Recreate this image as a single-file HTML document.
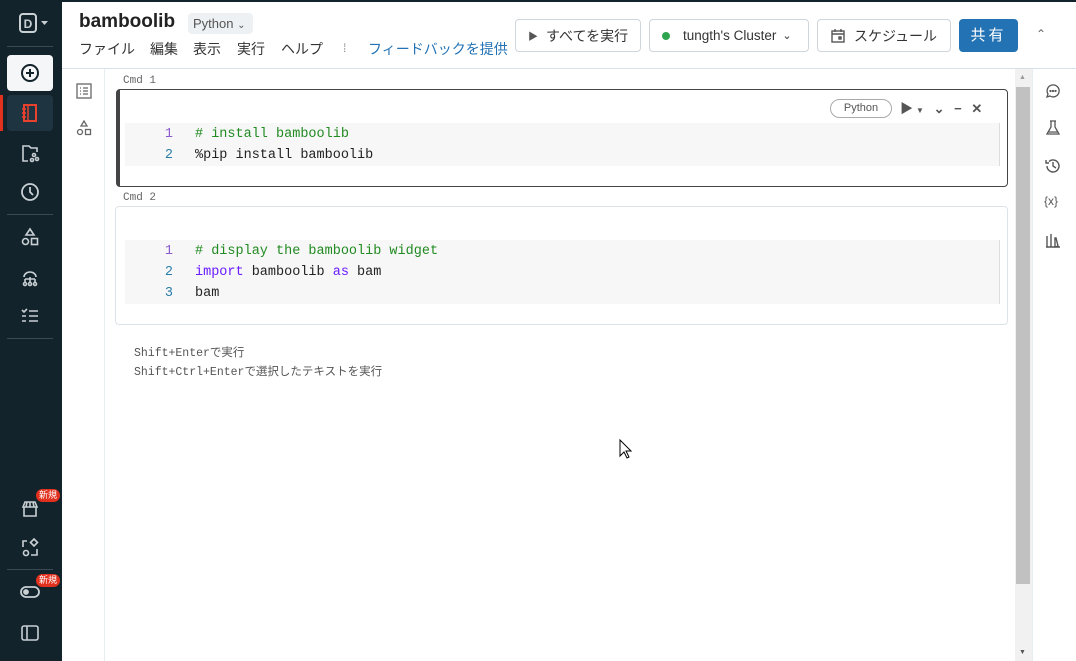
<!DOCTYPE html>
<html><head><meta charset="utf-8"><style>
*{box-sizing:border-box;margin:0;padding:0}
body{width:1076px;height:661px;overflow:hidden;background:#fff;font-family:"Liberation Sans","Noto Sans CJK JP",sans-serif;position:relative;color:#222}
.abs{position:absolute;white-space:nowrap}
.side{left:0;top:0;width:62px;height:661px;background:#13232b}
.ico{position:absolute;left:19px;width:22px;height:22px}
.sep{position:absolute;left:7px;width:46px;height:1px;background:#3a4a52}
.btn{position:absolute;top:19px;height:33px;border:1px solid #cfd6dc;border-radius:4px;background:#fff;font-size:14px;display:flex;align-items:center;padding:0 10px;color:#333;white-space:nowrap}
.mono{font-family:"Liberation Mono","DejaVu Sans Mono",monospace}
.code{font-size:13.5px;line-height:21px}
.ln{position:absolute;left:0;width:48px;text-align:right;color:#2a7fa8}
.cm{color:#218a21}.kw{color:#6a1bff}
.badge{position:absolute;left:36px;background:#e0301e;color:#fff;font-size:9px;border-radius:8px;padding:1px 3px;line-height:11px}
.ri{position:absolute;left:1044px;width:18px;height:18px}
.menu{position:absolute;top:39px;font-size:14px;color:#333}
</style></head><body>
<div class="abs" style="left:0;top:0;width:1076px;height:2px;background:#13232b"></div>
<div class="abs side">
 <svg class="ico" style="top:12px;left:18px;width:34px" viewBox="0 0 34 22"><rect x="2" y="2" width="16" height="18" rx="3" fill="none" stroke="#c8d0d4" stroke-width="2"/><text x="10" y="16" font-size="12" font-weight="bold" fill="#c8d0d4" text-anchor="middle" font-family="Liberation Sans">D</text><path d="M23 9h7l-3.5 4z" fill="#c8d0d4"/></svg>
 <div class="sep" style="top:46px"></div>
 <div class="abs" style="left:7px;top:55px;width:46px;height:36px;background:#f4f6f7;border-radius:4px"></div>
 <svg class="ico" style="top:62px" viewBox="0 0 22 22"><circle cx="11" cy="11" r="8" fill="none" stroke="#13232b" stroke-width="2"/><path d="M11 7v8M7 11h8" stroke="#13232b" stroke-width="2"/></svg>
 <div class="abs" style="left:0;top:95px;width:3px;height:36px;background:#e0301e"></div>
 <div class="abs" style="left:7px;top:95px;width:46px;height:36px;background:#1e3440;border-radius:4px"></div>
 <svg class="ico" style="top:102px" viewBox="0 0 22 22"><rect x="5" y="3" width="12" height="16" fill="none" stroke="#e8422f" stroke-width="2"/><path d="M3 7h4M3 11h4M3 15h4M9 3v16" stroke="#e8422f" stroke-width="1.5"/></svg>
 <svg class="ico" style="top:142px" viewBox="0 0 22 22" fill="none" stroke="#c8d0d4" stroke-width="1.6"><path d="M9 19H4V4h6l2 2h6v4"/><circle cx="15" cy="13" r="1.5"/><circle cx="18" cy="17" r="1.5"/><circle cx="13" cy="18" r="1.5"/></svg>
 <svg class="ico" style="top:181px" viewBox="0 0 22 22" fill="none" stroke="#c8d0d4" stroke-width="1.8"><circle cx="11" cy="11" r="8"/><path d="M11 6v5l3 3"/></svg>
 <div class="sep" style="top:214px"></div>
 <svg class="ico" style="top:226px" viewBox="0 0 22 22" fill="none" stroke="#c8d0d4" stroke-width="1.6"><path d="M11 3l4 6H7z"/><circle cx="6.5" cy="15.5" r="3"/><rect x="12.5" y="12.5" width="6" height="6"/></svg>
 <svg class="ico" style="top:266px" viewBox="0 0 22 22" fill="none" stroke="#c8d0d4" stroke-width="1.6"><path d="M5 11a6 5 0 0 1 12 0M11 11v5M6 13v3M16 13v3M6 13h10"/><circle cx="6" cy="18" r="1.5"/><circle cx="11" cy="18" r="1.5"/><circle cx="16" cy="18" r="1.5"/></svg>
 <svg class="ico" style="top:304px" viewBox="0 0 22 22" fill="none" stroke="#c8d0d4" stroke-width="1.6"><path d="M3 6l2 2 3-3M10 7h9M3 12h4M10 12h9M3 17h4M10 17h9"/></svg>
 <div class="sep" style="top:338px"></div>
 <svg class="ico" style="top:498px" viewBox="0 0 22 22" fill="none" stroke="#c8d0d4" stroke-width="1.6"><path d="M4 9l2-5h10l2 5zM5 9v9h12V9M8 4l-1 5M14 4l1 5M11 4v5"/></svg>
 <div class="badge" style="top:489px">新規</div>
 <svg class="ico" style="top:537px" viewBox="0 0 22 22" fill="none" stroke="#c8d0d4" stroke-width="1.6"><path d="M4 10V4h4M18 12v6h-6"/><circle cx="7" cy="16" r="2.5"/><path d="M15 2l3.5 3.5L15 9l-3.5-3.5z"/></svg>
 <div class="sep" style="top:569px"></div>
 <svg class="ico" style="top:581px" viewBox="0 0 22 22" fill="none" stroke="#c8d0d4" stroke-width="1.8"><rect x="2" y="6" width="18" height="10" rx="5"/><circle cx="7" cy="11" r="2" fill="#c8d0d4"/></svg>
 <div class="badge" style="top:574px">新規</div>
 <svg class="ico" style="top:622px" viewBox="0 0 22 22" fill="none" stroke="#c8d0d4" stroke-width="1.6"><rect x="3" y="4" width="16" height="14" rx="2"/><path d="M8 4v14"/></svg>
</div>
<!-- header -->
<div class="abs" style="left:79px;top:11px;font-size:19px;font-weight:bold;color:#222">bamboolib</div>
<div class="abs" style="left:188px;top:13px;height:21px;width:65px;background:#eef1f3;border-radius:4px;font-size:13px;color:#555;padding:3px 5px">Python <span style="font-size:10px">&#8964;</span></div>
<div class="menu" style="left:79px">ファイル</div>
<div class="menu" style="left:150px">編集</div>
<div class="menu" style="left:193px">表示</div>
<div class="menu" style="left:237px">実行</div>
<div class="menu" style="left:281px">ヘルプ</div>
<div class="abs" style="left:343px;top:41px;font-size:12px;color:#888">⁞</div>
<div class="abs" style="left:368px;top:39px;font-size:14px;color:#2272b4">フィードバックを提供</div>
<div class="btn" style="left:515px;width:126px"><span style="font-size:10px;color:#555;margin-right:8px;margin-left:2px">▶</span>すべてを実行</div>
<div class="btn" style="left:649px;width:160px;font-size:13.5px"><span style="width:8px;height:8px;border-radius:50%;background:#2fa44f;display:inline-block;margin-right:13px;margin-left:2px"></span>tungth's Cluster<span style="margin-left:6px;font-size:11px">&#8964;</span></div>
<div class="btn" style="left:817px;width:134px"><svg width="16" height="16" viewBox="0 0 16 16" fill="none" stroke="#555" stroke-width="1.4" style="margin-right:8px;margin-left:2px"><rect x="2" y="3" width="12" height="11"/><path d="M2 6h12M5 1v3M11 1v3"/><rect x="9" y="9" width="2" height="2" fill="#555"/></svg>スケジュール</div>
<div class="abs" style="left:959px;top:19px;width:59px;height:33px;background:#2272b4;border-radius:4px;color:#fff;font-size:15px;text-align:center;line-height:33px;letter-spacing:3px">共有</div>
<div class="abs" style="left:1036px;top:27px;font-size:12px;color:#666">&#8963;</div>
<div class="abs" style="left:62px;top:68px;width:1014px;height:1px;background:#d5e2ec"></div>
<!-- left panel -->
<div class="abs" style="left:104px;top:69px;width:1px;height:592px;background:#e8edf0"></div>
<svg class="abs" style="left:75px;top:82px" width="18" height="18" viewBox="0 0 18 18" fill="none" stroke="#666" stroke-width="1.3"><rect x="2" y="2" width="14" height="14"/><path d="M5 6h1M8 6h5M5 9h1M8 9h5M5 12h1M8 12h5"/></svg>
<svg class="abs" style="left:75px;top:119px" width="18" height="18" viewBox="0 0 18 18" fill="none" stroke="#666" stroke-width="1.3"><path d="M9 2l3 5H6z"/><circle cx="5" cy="13" r="2.5"/><rect x="10.5" y="10.5" width="5" height="5"/></svg>
<!-- content -->
<div class="abs mono" style="left:123px;top:75px;font-size:11px;color:#666">Cmd 1</div>
<div class="abs" style="left:116px;top:89px;width:892px;height:98px;border:1px solid #444;border-left:4px solid #444;border-radius:4px"></div>
<div class="abs" style="left:830px;top:99px;width:62px;height:19px;border:1px solid #aaa;border-radius:10px;font-size:11px;color:#555;text-align:center;line-height:17px">Python</div>
<div class="abs" style="left:900px;top:98px;font-size:13px;color:#555;letter-spacing:3px">▶<span style="font-size:8px">▼</span> <b>&#8964;</b> <b>−</b> <b>✕</b></div>
<div class="abs mono code" style="left:125px;top:123px;width:875px;height:43px;background:#f7f7f7;border-right:1px solid #ddd">
 <div class="ln" style="top:1px;color:#8a5cd0">1</div><div class="abs cm" style="left:70px;top:1px"># install bamboolib</div>
 <div class="ln" style="top:22px">2</div><div class="abs" style="left:70px;top:22px">%pip install bamboolib</div>
</div>
<div class="abs mono" style="left:123px;top:192px;font-size:11px;color:#666">Cmd 2</div>
<div class="abs" style="left:115px;top:206px;width:893px;height:119px;border:1px solid #dde3e7;border-radius:4px"></div>
<div class="abs mono code" style="left:125px;top:240px;width:875px;height:64px;background:#f7f7f7;border-right:1px solid #ddd">
 <div class="ln" style="top:1px;color:#8a5cd0">1</div><div class="abs cm" style="left:70px;top:1px"># display the bamboolib widget</div>
 <div class="ln" style="top:22px">2</div><div class="abs" style="left:70px;top:22px"><span class="kw">import</span> bamboolib <span class="kw">as</span> bam</div>
 <div class="ln" style="top:43px">3</div><div class="abs" style="left:70px;top:43px">bam</div>
</div>
<div class="abs" style="left:134px;top:344px;font-size:11.5px;line-height:19px;color:#555;font-family:'Liberation Mono','Noto Sans CJK JP',monospace">Shift+Enterで実行<br>Shift+Ctrl+Enterで選択したテキストを実行</div>
<svg class="abs" style="left:619px;top:439px" width="14" height="21" viewBox="0 0 14 21"><path d="M1 1v16l4-4 3 6 2-1-3-6h5z" fill="#fff" stroke="#000"/></svg>
<!-- scrollbar -->
<div class="abs" style="left:1015px;top:69px;width:17px;height:592px;background:#f1f1f1"></div>
<div class="abs" style="left:1016px;top:87px;width:14px;height:497px;background:#c1c1c1"></div>
<div class="abs" style="left:1019px;top:74px;font-size:7px;color:#999">▲</div>
<div class="abs" style="left:1019px;top:649px;font-size:7px;color:#555">▼</div>
<div class="abs" style="left:1032px;top:69px;width:1px;height:592px;background:#e8edf0"></div>
<svg class="ri" style="top:82px" viewBox="0 0 18 18" fill="none" stroke="#555" stroke-width="1.3"><path d="M3 15l1-3a6 6 0 1 1 2 2z"/><circle cx="6.5" cy="9" r=".5"/><circle cx="9" cy="9" r=".5"/><circle cx="11.5" cy="9" r=".5"/></svg>
<svg class="ri" style="top:119px" viewBox="0 0 18 18" fill="none" stroke="#555" stroke-width="1.3"><path d="M6 2h6M7 2v6l-4 7h12l-4-7V2M4 13h10"/></svg>
<svg class="ri" style="top:157px" viewBox="0 0 18 18" fill="none" stroke="#555" stroke-width="1.4"><path d="M3 9a6 6 0 1 0 2-4.5M2 3v3h3M9 5v4l3 2"/></svg>
<div class="abs" style="left:1044px;top:194px;font-size:12px;color:#555">{x}</div>
<svg class="ri" style="top:232px" viewBox="0 0 18 18" fill="none" stroke="#555" stroke-width="1.4"><path d="M3 4v11M7 2v13M11 6v9l3-1-2-8zM2 15h14"/></svg>
</body></html>
